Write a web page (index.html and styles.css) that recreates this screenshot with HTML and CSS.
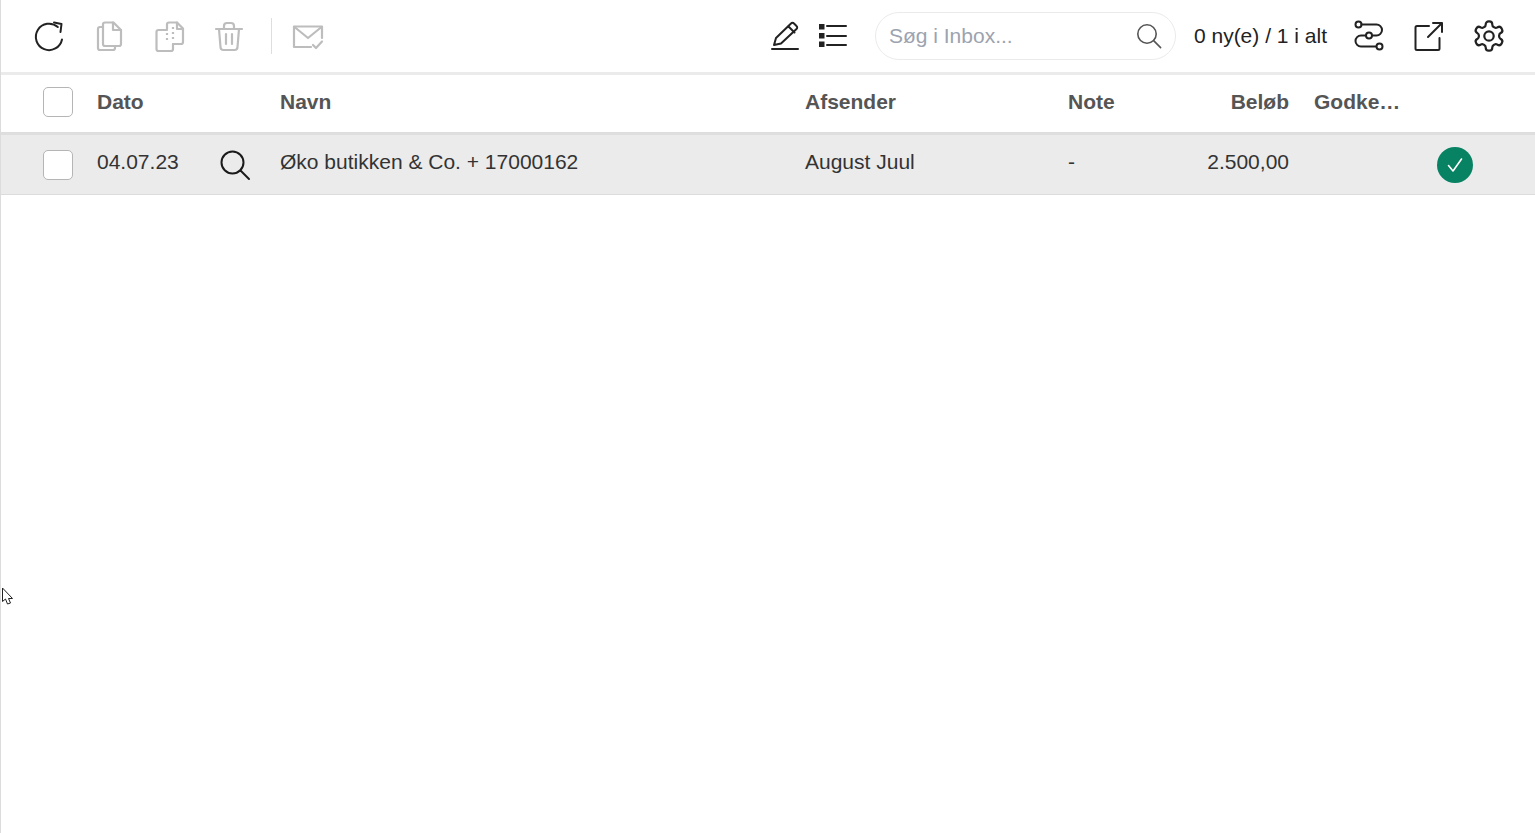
FILE: index.html
```html
<!DOCTYPE html>
<html lang="da">
<head>
<meta charset="utf-8">
<title>Inbox</title>
<link rel="stylesheet" href="styles.css">
</head>
<body>
<div class="app">
  <header class="toolbar">
    <div class="tools">
      <svg class="icon dark" viewBox="0 0 30 30"><path d="M28 18.500A13.200 13.200 0 1 1 23.800 6"/><path d="M20 1.500 27.500 3 26.500 11"/></svg>
      <svg class="icon muted" viewBox="0 0 30 30"><path d="M11 1.500h8.500L27 9v14a2 2 0 0 1-2 2H11a2 2 0 0 1-2-2V3.500a2 2 0 0 1 2-2z"/><path d="M19 1.500V9h8"/><path d="M9 6H6a2 2 0 0 0-2 2v19a2 2 0 0 0 2 2h13a2 2 0 0 0 2-2v-2"/></svg>
      <svg class="icon muted" viewBox="0 0 30 30"><path d="M13 8V3.500a2 2 0 0 1 2-2h8l6 6V21a2 2 0 0 1-2 2h-8"/><path d="M23 1.500V8h6"/><path d="M13 9H4.500a2 2 0 0 0-2 2v17a2 2 0 0 0 2 2H17a2 2 0 0 0 2-2v-5"/><path class="dash" d="M13 12v10M19 6v12"/></svg>
      <svg class="icon muted" viewBox="0 0 30 30"><path d="M2 8h26"/><path d="M10 8V5a3 3 0 0 1 3-3h4a3 3 0 0 1 3 3v3"/><path d="M5 8l1.500 18a3 3 0 0 0 3 3h11a3 3 0 0 0 3-3L25 8"/><path d="M12 13v10M18 13v10"/></svg>
      <span class="divider"></span>
      <svg class="icon muted" viewBox="0 0 30 30"><path d="M29 17V5.500H1V26h17"/><path d="M1.500 6 15 17 28.500 6"/><path d="M20 24l3 3 6-6.500"/></svg>
    </div>
    <div class="status">
      <svg class="icon dark" viewBox="0 0 30 30"><path d="M4 24 6 17 21 2.500a2 2 0 0 1 3 0l2.500 2.500a2 2 0 0 1 0 3L11 22.500z"/><path d="M18.500 5.500l6 6"/><path d="M2 28h26"/></svg>
      <svg class="icon dark list" viewBox="0 0 30 30"><path class="solid" d="M2 3h5.500v5.500H2zM2 12h5.500v5.500H2zM2 20.500h5.500V26H2z"/><path d="M10 5h19M10 15h19M10 24h19"/></svg>
      <label class="search">
        <input class="search-input" type="text" placeholder="Søg i Inbox...">
        <svg class="icon grey" viewBox="0 0 30 30"><circle cx="12.500" cy="12.500" r="11.500"/><path d="M20.800 20.800 29.500 29.500"/></svg>
      </label>
      <span class="count">0 ny(e) / 1 i alt</span>
      <svg class="icon dark" viewBox="0 0 30 30"><circle cx="4.500" cy="3.500" r="3"/><path d="M7.500 3.500h15a5.500 5.500 0 0 1 0 11h-4"/><circle cx="15" cy="14.500" r="3"/><path d="M12 14.500H7a5.500 5.500 0 0 0 0 11h15"/><circle cx="25.500" cy="25.500" r="3"/></svg>
      <svg class="icon dark" viewBox="0 0 30 30"><path d="M15 5H3a1.500 1.500 0 0 0-1.500 1.500v21A1.500 1.500 0 0 0 3 29h21a1.500 1.500 0 0 0 1.500-1.500V17"/><path d="M14 16 27.500 2.500"/><path d="M19 2h9v9"/></svg>
      <svg class="icon dark" viewBox="1.800 1.800 20.400 20.400"><path class="thin" d="M12.220 2h-.44a2 2 0 0 0-2 2v.18a2 2 0 0 1-1 1.730l-.43.25a2 2 0 0 1-2 0l-.15-.08a2 2 0 0 0-2.730.73l-.22.38a2 2 0 0 0 .73 2.730l.15.1a2 2 0 0 1 1 1.720v.51a2 2 0 0 1-1 1.740l-.15.09a2 2 0 0 0-.73 2.730l.22.38a2 2 0 0 0 2.730.73l.15-.08a2 2 0 0 1 2 0l.43.25a2 2 0 0 1 1 1.730V20a2 2 0 0 0 2 2h.44a2 2 0 0 0 2-2v-.18a2 2 0 0 1 1-1.730l.43-.25a2 2 0 0 1 2 0l.15.08a2 2 0 0 0 2.730-.73l.22-.39a2 2 0 0 0-.73-2.730l-.15-.08a2 2 0 0 1-1-1.740v-.5a2 2 0 0 1 1-1.740l.15-.09a2 2 0 0 0 .73-2.730l-.22-.38a2 2 0 0 0-2.730-.73l-.15.08a2 2 0 0 1-2 0l-.43-.25a2 2 0 0 1-1-1.730V4a2 2 0 0 0-2-2z"/><circle class="thin" cx="12" cy="12" r="3.200"/></svg>
    </div>
  </header>

  <div class="table-row head">
    <span class="box"></span>
    <span class="cell">Dato</span>
    <span class="cell">Navn</span>
    <span class="cell">Afsender</span>
    <span class="cell">Note</span>
    <span class="cell amount">Beløb</span>
    <span class="cell approved">Godke…</span>
    <span class="cell"></span>
  </div>

  <div class="table-row item">
    <span class="box"></span>
    <span class="cell date">04.07.23
      <svg class="icon black" viewBox="0 0 30 30"><circle cx="12.500" cy="12.500" r="11"/><path d="M20.500 20.500 29 29"/></svg>
    </span>
    <span class="cell">Øko butikken &amp; Co. + 17000162</span>
    <span class="cell">August Juul</span>
    <span class="cell">-</span>
    <span class="cell amount">2.500,00</span>
    <span class="cell approved"></span>
    <span class="status-cell"><span class="ok"><svg class="tick" viewBox="0 0 36 36"><path d="M11.500 18.500l4.500 5.500 8.500-12"/></svg></span></span>
  </div>

  <svg class="pointer" viewBox="0 0 14 20"><path d="M1.500 1v13.500l3-2.500 2 5 3-1-2-4.500h4z"/></svg>
</div>
</body>
</html>
```
FILE: styles.css
```css
* { box-sizing: border-box; }
html, body { margin: 0; height: 100%; background: #fff; }
body { font-family: "Liberation Sans", Arial, sans-serif; font-size: 21px; color: #333; }
.app { position: relative; height: 833px; border-left: 1px solid #dcdcdc; overflow: hidden; }

.toolbar { display: flex; justify-content: space-between; align-items: center; height: 75px; padding: 0 31px 0 33px; border-bottom: 3px solid #ebebeb; }
.tools, .status { display: flex; align-items: center; gap: 30px; }

.icon { display: block; width: 30px; height: 30px; flex: none; fill: none; stroke-width: 2; stroke-linecap: round; stroke-linejoin: round; overflow: visible; }
.icon.dark { stroke: #222; }
.icon.muted { stroke: #bdbdbd; stroke-width: 2.200; }
.icon.grey { stroke: #555; width: 24px; height: 24px; }
.icon.black { stroke: #1a1a1a; }
.icon .thin { stroke-width: 1.500; }
.icon .solid { fill: #222; stroke: none; }
.icon .dash { stroke-dasharray: 2 3; stroke-linecap: butt; }
.list { margin-left: -13px; }

.divider { width: 1px; height: 36px; background: #dedede; margin: 0 -9px 0 -3px; }

.search { display: flex; align-items: center; width: 301px; height: 48px; margin-left: -2px; padding: 0 14px 0 13px; border: 1px solid #ebebeb; border-radius: 24px; }
.search-input { flex: 1; min-width: 0; border: 0; outline: 0; padding: 0; background: transparent; font: inherit; color: #333; }
.search-input::placeholder { color: #9ca3af; opacity: 1; }
.count { margin: 0 -3px 0 -12px; color: #222; white-space: nowrap; }

.table-row { display: grid; grid-template-columns: 54px 183px 525px 263px 120px 101px 111px 1fr; align-items: center; padding-left: 42px; }
.head { height: 60px; padding-bottom: 3px; border-bottom: 3px solid #dedede; font-weight: 700; color: #555; }
.item { height: 60px; padding-top: 1px; border-bottom: 1px solid #dcdcdc; background: #ebebeb; }
.item .cell { position: relative; top: -3px; }

.box { width: 30px; height: 30px; border: 1px solid #b5b5b5; border-radius: 5px; background: #fff; }
.cell { white-space: nowrap; }
.amount { text-align: right; }
.approved { padding-left: 25px; }
.date { display: flex; align-items: center; justify-content: space-between; padding-right: 30px; }
.date .icon { position: relative; top: 3px; }

.ok { display: block; width: 36px; height: 36px; margin-left: 37px; border-radius: 50%; background: #078263; }
.tick { display: block; width: 36px; height: 36px; fill: none; stroke: #fff; stroke-width: 1.600; stroke-linecap: round; stroke-linejoin: round; }

.pointer { position: absolute; left: 0; top: 587px; width: 14px; height: 20px; fill: #fff; stroke: #222; stroke-width: 1; }
```
